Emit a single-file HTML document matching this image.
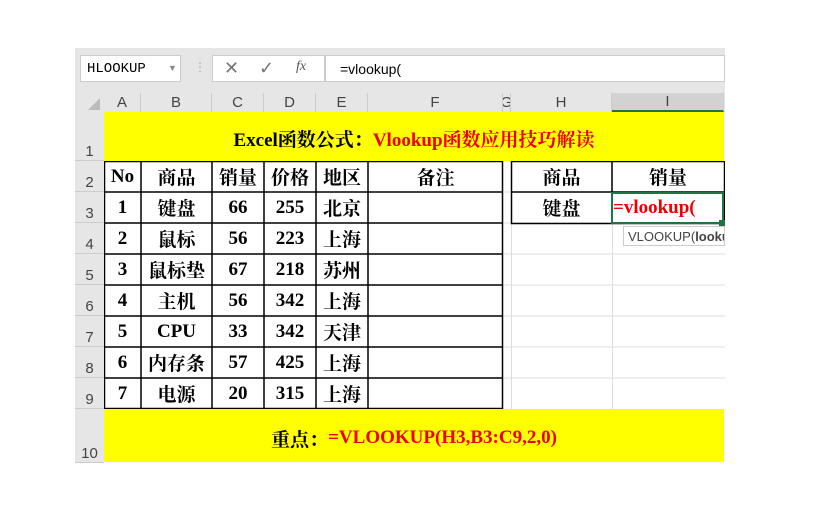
<!DOCTYPE html><html><head><meta charset="utf-8"><style>
body{margin:0;width:821px;height:515px;background:#fff;position:relative;overflow:hidden;font-family:"Liberation Serif","Noto Serif CJK SC",serif}
.a{position:absolute;box-sizing:border-box}
.t{position:absolute;display:flex;align-items:center;justify-content:center;font-weight:bold;font-size:19px;color:#000;box-sizing:border-box}
.ch{position:absolute;top:93px;height:19px;font:15px "Liberation Sans",sans-serif;color:#444;display:flex;align-items:center;justify-content:center;border-right:1px solid #ccc;box-sizing:border-box}
.rh{position:absolute;left:75px;width:29px;font:15px "Liberation Sans",sans-serif;color:#444;display:flex;align-items:flex-end;justify-content:center;border-bottom:1px solid #ccc;box-sizing:border-box;background:#e6e6e6}
</style></head><body>
<div class="a" style="left:75px;top:48px;width:650px;height:45px;background:#e6e6e6"></div>
<div class="a" style="left:80px;top:55px;width:101px;height:27px;background:#fff;border:1px solid #ccc;font:14px 'Liberation Mono',monospace;padding:5px 6px">HLOOKUP</div>
<div class="a" style="left:168px;top:63px;font-size:9px;color:#888">▼</div>
<div class="a" style="left:194px;top:60px;color:#aaa;font-size:12px">⋮</div>
<div class="a" style="left:213px;top:55px;width:34px;height:27px"></div>
<div class="a" style="left:212px;top:55px;width:113px;height:27px;background:#fff;border:1px solid #ccc;font:18px 'Liberation Sans',sans-serif;color:#777"><span style="position:absolute;left:11px;top:2px">✕</span><span style="position:absolute;left:46px;top:2px">✓</span><span style="position:absolute;left:83px;top:3px;font:italic 14px 'Liberation Serif',serif;color:#555">fx</span></div>
<div class="a" style="left:325px;top:55px;width:400px;height:27px;background:#fff;border:1px solid #ccc;font:14px 'Liberation Sans',sans-serif;padding:5px 14px">=vlookup(</div>
<div class="a" style="left:75px;top:93px;width:29px;height:19px;background:#e6e6e6"></div>
<div class="a" style="left:88px;top:98px;width:0;height:0;border-left:12px solid transparent;border-bottom:12px solid #bbb"></div>
<div class="a" style="left:104px;top:93px;width:621px;height:19px;background:#e6e6e6"></div>
<div class="ch" style="left:104px;width:37px">A</div><div class="ch" style="left:141px;width:71px">B</div><div class="ch" style="left:212px;width:52px">C</div><div class="ch" style="left:264px;width:52px">D</div><div class="ch" style="left:316px;width:52px">E</div><div class="ch" style="left:368px;width:135px">F</div><div class="ch" style="left:503px;width:8px;overflow:hidden">G</div><div class="ch" style="left:511px;width:101px">H</div><div class="ch" style="left:612px;width:112px;background:#d2d2d2;border-bottom:2px solid #217346">I</div>
<div class="a" style="left:75px;top:112px;width:29px;height:351px;background:#e6e6e6"></div>
<div class="rh" style="top:112px;height:49px">1</div><div class="rh" style="top:161px;height:31px">2</div><div class="rh" style="top:192px;height:31px">3</div><div class="rh" style="top:223px;height:31px">4</div><div class="rh" style="top:254px;height:31px">5</div><div class="rh" style="top:285px;height:31px">6</div><div class="rh" style="top:316px;height:31px">7</div><div class="rh" style="top:347px;height:31px">8</div><div class="rh" style="top:378px;height:31px">9</div><div class="rh" style="top:409px;height:54px">10</div>
<svg class="a" style="left:104px;top:161px" width="621" height="248"><g stroke="#ddd">
<line x1="0" y1="31" x2="621" y2="31"/><line x1="0" y1="62" x2="621" y2="62"/><line x1="0" y1="93" x2="621" y2="93"/><line x1="0" y1="124" x2="621" y2="124"/><line x1="0" y1="155" x2="621" y2="155"/><line x1="0" y1="186" x2="621" y2="186"/><line x1="0" y1="217" x2="621" y2="217"/><line x1="407.5" y1="0" x2="407.5" y2="248"/><line x1="508.5" y1="0" x2="508.5" y2="248"/></g>
<g stroke="#000" stroke-width="1.5" fill="none"><rect x="0.5" y="0.5" width="398" height="247"/>
<line x1="37" y1="0" x2="37" y2="248"/><line x1="108" y1="0" x2="108" y2="248"/><line x1="160" y1="0" x2="160" y2="248"/><line x1="212" y1="0" x2="212" y2="248"/><line x1="264" y1="0" x2="264" y2="248"/>
<line x1="0" y1="31" x2="399" y2="31"/><line x1="0" y1="62" x2="399" y2="62"/><line x1="0" y1="93" x2="399" y2="93"/><line x1="0" y1="124" x2="399" y2="124"/><line x1="0" y1="155" x2="399" y2="155"/><line x1="0" y1="186" x2="399" y2="186"/><line x1="0" y1="217" x2="399" y2="217"/>
<rect x="407.5" y="0.5" width="213" height="62"/><line x1="508" y1="0" x2="508" y2="62"/><line x1="407" y1="31" x2="621" y2="31"/></g></svg>
<div class="a" style="left:104px;top:112px;width:620px;height:49px;background:#ff0"></div>
<div class="t" style="left:104px;top:118px;width:620px;height:40px;font-size:19px">Excel函数公式：<span style="color:#e00">Vlookup函数应用技巧解读</span></div>
<div class="a" style="left:104px;top:409px;width:620px;height:53px;background:#ff0"></div>
<div class="t" style="left:104px;top:418px;width:620px;height:40px;font-size:19px">重点：<span style="color:#e00">=VLOOKUP(H3,B3:C9,2,0)</span></div>
<div id="g"></div>
<div class="a" style="left:611px;top:192px;width:113px;height:32px;border:2px solid #217346"></div>
<div class="a" style="left:719px;top:220px;width:6px;height:6px;background:#217346"></div>
<div class="t" style="left:612px;top:192px;height:31px;color:#e00;justify-content:flex-start;padding-left:1px">=vlookup(</div>
<div class="a" style="left:623px;top:226px;width:102px;height:20px;background:#fff;border:1px solid #ccc;font:13px 'Liberation Sans',sans-serif;color:#444;padding:2px 4px;white-space:nowrap;overflow:hidden">VLOOKUP(<b>looku</b></div>
<script>
var cols=[104,141,212,264,316,368,503],rows=[["No","商品","销量","价格","地区","备注"],["1","键盘","66","255","北京",""],["2","鼠标","56","223","上海",""],["3","鼠标垫","67","218","苏州",""],["4","主机","56","342","上海",""],["5","CPU","33","342","天津",""],["6","内存条","57","425","上海",""],["7","电源","20","315","上海",""]],h="";
rows.forEach(function(r,i){r.forEach(function(c,j){h+='<div class="t" style="left:'+cols[j]+'px;top:'+(161+31*i)+'px;width:'+(cols[j+1]-cols[j])+'px;height:31px">'+c+'</div>'})});
h+='<div class="t" style="left:511px;top:161px;width:101px;height:31px">商品</div><div class="t" style="left:612px;top:161px;width:112px;height:31px">销量</div><div class="t" style="left:511px;top:192px;width:101px;height:31px">键盘</div>';
document.getElementById("g").innerHTML=h;
</script>
</body></html>
